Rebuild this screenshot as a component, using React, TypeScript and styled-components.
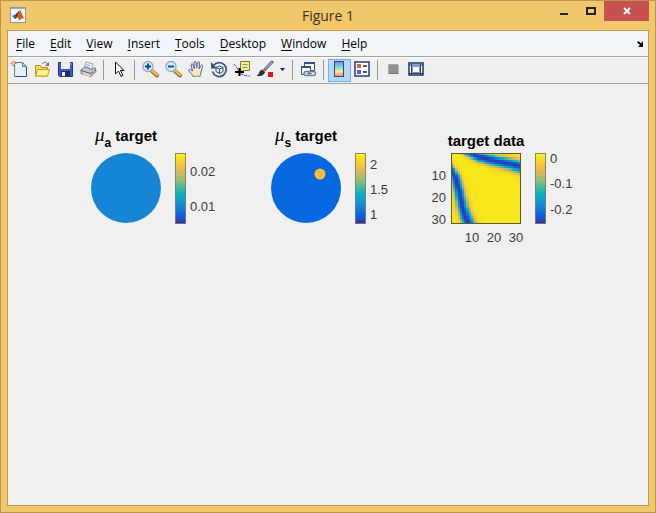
import React from "react";
import styled, { createGlobalStyle } from "styled-components";

const GlobalStyle = createGlobalStyle`
  *, *::before, *::after { box-sizing: border-box; }
  body { margin: 0; }
  button { font: inherit; color: inherit; border: 0; padding: 0; margin: 0; background: none; }
`;

const WindowFrame = styled.div`
  min-height: 100vh;
  display: flex;
  flex-direction: column;
  padding: 0 6px 6px;
  border: 1px solid #b8964c;
  background: #f0c76a;
  font-family: "Open Sans", "Noto Sans", sans-serif;
  color: #000;
`;

const TitleBar = styled.header`
  height: 29px;
  display: grid;
  grid-template-columns: 1fr auto 1fr;
  align-items: start;
`;

const AppIcon = styled.svg`
  margin: 6px 0 0 3px;
`;

const WindowTitle = styled.h1`
  margin: 0;
  font-size: 14px;
  font-weight: 400;
  line-height: 29px;
  color: #3d3322;
`;

const WindowButtons = styled.div`
  display: flex;
  justify-content: flex-end;
`;

const WindowButton = styled.button<{ $wide?: boolean; $danger?: boolean }>`
  width: ${(p) => (p.$wide ? 45 : 27)}px;
  height: 20px;
  display: grid;
  place-items: center;
  background: ${(p) => (p.$danger ? "#c75050" : "transparent")};
`;

const Client = styled.main`
  flex: 1;
  display: flex;
  flex-direction: column;
  border: 1px solid #bf9e52;
  background: #f0f0f0;
`;

const MenuBar = styled.nav`
  height: 25px;
  display: flex;
  align-items: center;
  gap: 15px;
  padding: 0 5px 0 8px;
  background: #f1f5f9;
  font-size: 12px;
  line-height: 24px;
`;

const MenuItem = styled.button`
  white-space: nowrap;
`;

const Mnemonic = styled.span`
  text-decoration: underline;
  text-underline-offset: 2px;
`;

const DockButton = styled.button`
  margin-left: auto;
  display: flex;
`;

const ToolBar = styled.div`
  height: 28px;
  display: flex;
  align-items: center;
  border-top: 1px solid #a2a2a4;
  border-bottom: 1px solid #a2a2a4;
  background: linear-gradient(#fdfdfd 0 1px, #f1f0f1 1px 4px, #efefef 4px);
`;

const ToolButton = styled.button<{ $active?: boolean; $narrow?: boolean }>`
  width: ${(p) => (p.$narrow ? 12 : 23)}px;
  height: 23px;
  padding: 0 1px 2px 0;
  display: grid;
  place-items: center;
  background: ${(p) => (p.$active ? "#b5d7f5" : "transparent")};
  outline: ${(p) => (p.$active ? "1px solid #6fb0e6" : "none")};
  outline-offset: -1px;
`;

const Separator = styled.span`
  width: 8px;
  height: 20px;
  display: flex;
  padding-left: 3px;
  &::before {
    content: "";
    width: 1px;
    background: #989898;
  }
`;

const Canvas = styled.section`
  flex: 1;
  display: flex;
  align-items: flex-start;
  padding: 41px 0 24px 63px;
  font-family: "Liberation Sans", Arial, sans-serif;
`;

const Subplot = styled.figure`
  width: 180px;
  margin: 0;
`;

const PlotTitle = styled.figcaption<{ $low?: boolean }>`
  width: 110px;
  height: 28px;
  padding-top: ${(p) => (p.$low ? 7 : 0)}px;
  font-size: 15px;
  font-weight: 700;
  line-height: 18px;
  text-align: center;
  white-space: nowrap;
`;

const Mu = styled.i`
  font-family: "Liberation Serif", "Times New Roman", serif;
  font-weight: 400;
  font-size: 19px;
  line-height: 1;
`;

const Sub = styled.sub`
  font-size: 12px;
  line-height: 1;
  vertical-align: -6px;
`;

const Axes = styled.svg`
  display: block;
  overflow: visible;
  text {
    font-size: 13px;
    fill: #3a3a3a;
  }
`;

/* ---------- colour map ---------- */

const PARULA: [number, number, number][] = [
  [53, 42, 135], [38, 74, 201], [3, 99, 225], [15, 119, 219], [20, 133, 212],
  [10, 154, 206], [6, 167, 198], [21, 177, 180], [56, 185, 158], [101, 190, 134],
  [146, 191, 115], [184, 189, 99], [217, 186, 86], [252, 190, 61], [252, 206, 46],
  [245, 227, 30], [249, 251, 14],
];

function parula(t: number): string {
  const p = Math.max(0, Math.min(1, t)) * (PARULA.length - 1);
  const i = Math.min(Math.floor(p), PARULA.length - 2);
  const f = p - i;
  const c = PARULA[i].map((v, k) => Math.round(v + (PARULA[i + 1][k] - v) * f));
  return `rgb(${c.join(",")})`;
}

/* ---------- heat map data: two curved valleys on a flat plateau ---------- */

type Pt = [number, number];
const N = 32;
const UPPER: Pt[] = [[6.5, -1], [9, 0.2], [13, 1.8], [20.7, 3.7], [28, 5.1], [33, 6.4]];
const LOWER: Pt[] = [[-1, 6], [0.6, 8.6], [1.9, 11], [3.7, 17.6], [5.2, 25], [6.4, 29], [8.3, 33]];

function valley(x: number, y: number, line: Pt[], inner: number): number {
  let best = Infinity;
  let side = 1;
  let along = 0;
  for (let i = 0; i < line.length - 1; i++) {
    const [ax, ay] = line[i];
    const dx = line[i + 1][0] - ax;
    const dy = line[i + 1][1] - ay;
    const u = Math.max(0, Math.min(1, ((x - ax) * dx + (y - ay) * dy) / (dx * dx + dy * dy)));
    const d = Math.hypot(x - ax - u * dx, y - ay - u * dy);
    if (d < best) {
      best = d;
      side = Math.sign(dx * (y - ay) - dy * (x - ax)) * inner;
      along = (i + u) / (line.length - 1);
    }
  }
  const s = side > 0 ? 1.25 + 0.95 * along : 1.25 + 0.6 * along;
  return Math.exp(-Math.pow(best / s, 2.2) / 2);
}

const CELLS = Array.from({ length: N * N }, (_, k) => {
  const col = k % N;
  const row = Math.floor(k / N);
  const g = Math.max(
    valley(col + 0.5, row + 0.5, UPPER, 1),
    valley(col + 0.5, row + 0.5, LOWER, -1)
  );
  return { col, row, fill: parula(0.95 - 0.92 * g) };
});

function HeatMap() {
  return (
    <g transform="translate(20 0)">
      <g transform="scale(2.1875)" shapeRendering="crispEdges">
        {CELLS.map((c) => (
          <rect key={`${c.col}-${c.row}`} x={c.col} y={c.row} width="1" height="1" fill={c.fill} />
        ))}
      </g>
      <rect x="0.5" y="0.5" width="69" height="70" fill="none" stroke="#5d5a2c" />
    </g>
  );
}

type Tick = { at: number; label: string };

function ColorBar({ id, ticks }: { id: string; ticks: Tick[] }) {
  return (
    <g>
      <defs>
        <linearGradient id={id} x1="0" y1="1" x2="0" y2="0">
          {PARULA.map((_, i) => (
            <stop key={i} offset={i / 16} stopColor={parula(i / 16)} />
          ))}
        </linearGradient>
      </defs>
      <rect x="104.5" y="0.5" width="10" height="70" fill={`url(#${id})`} stroke="#6b6b6b" strokeOpacity="0.8" />
      {ticks.map((t) => (
        <text key={t.label} x="119" y={t.at + 5}>{t.label}</text>
      ))}
    </g>
  );
}

/* ---------- toolbar drawings ---------- */

const Icon = ({ children }: { children: React.ReactNode }) => (
  <svg width="18" height="18" viewBox="0 0 18 18" fill="none" aria-hidden="true">{children}</svg>
);

const NewIcon = () => (
  <Icon>
    <path d="M4.500 2.500h8l4 4v10h-12z" fill="#e4effb" stroke="#5a7fae" />
    <path d="M16.500 7v9.500H5" stroke="#2f4f86" />
    <path d="M12.500 2.500v4h4z" fill="#b9d2ee" stroke="#5a7fae" />
    <path d="M3.500 0.500v6M0.500 3.500h6M1.500 1.500l4 4M5.500 1.500l-4 4" stroke="#e07a4a" />
    <circle cx="3.500" cy="3.500" r="1.200" fill="#ffd6a0" />
  </Icon>
);
const OpenIcon = () => (
  <Icon>
    <path d="M2.500 16v-10.500h5l1 2h6V16z" fill="#f7d968" stroke="#b8901e" />
    <path d="M2.500 16l2-6.500h12l-2 6.500z" fill="#fff08e" stroke="#c59a1a" />
    <path d="M9 4c2-2.500 4.500-2 5.500 0" stroke="#4f76a8" />
    <path d="M16 2v4h-4z" fill="#4f76a8" />
  </Icon>
);
const SaveIcon = () => (
  <Icon>
    <path d="M2.500 2.500h14v14h-13l-1-1z" fill="#3e58d0" stroke="#26358c" />
    <path d="M5 2h9v7H5z" fill="#e6f0fb" />
    <path d="M5 11h9v5H5z" fill="#222c62" />
    <path d="M6 12h3v4H6z" fill="#f1f4f8" />
    <path d="M15 3v2" stroke="#a9b8f2" />
  </Icon>
);
const PrintIcon = () => (
  <Icon>
    <path d="M5 9l2-7 7 2-2 7z" fill="#fbfcfe" stroke="#92a2b5" />
    <path d="M7.500 4.500l4 1M7 6.500l4 1" stroke="#85a7d4" />
    <path d="M2 10l4-3 7 2.500 3-2 1 4-5 5-10-3z" fill="#c6c8cc" stroke="#717680" />
    <path d="M2 10.500l10 3 5-4" stroke="#595e68" />
    <path d="M4 13.500l7 2.500" stroke="#f4f5f6" />
    <path d="M14 12h1" stroke="#d49c26" strokeWidth="2" />
  </Icon>
);
const PointerIcon = () => (
  <Icon>
    <path d="M5.500 2v12l3-3 2.500 5.500 2-1-2.500-5H14z" fill="#fff" stroke="#111" />
  </Icon>
);
const ZoomIcon = ({ plus }: { plus?: boolean }) => (
  <Icon>
    <path d="M11 11l5 4.500" stroke="#9a6725" strokeWidth="4" strokeLinecap="round" />
    <path d="M11 10.500l5 4.500" stroke="#f1b552" strokeWidth="2.400" strokeLinecap="round" />
    <circle cx="7" cy="6.500" r="5" fill="#d1edfa" stroke="#8fb0cf" strokeWidth="1.300" />
    <path d={plus ? "M4 6.500h6M7 3.500v6" : "M4 6.500h6"} stroke="#173c92" strokeWidth="1.800" />
  </Icon>
);
const HandIcon = () => (
  <Icon>
    <path
      d="M6 16.500c-1-2.500-3-4-4.500-6 0-1.500 1.500-1.500 2.500-.5l1.500 1L4 5c0-1.500 1.500-1.700 2-.3l1.300 4L7 2.500c.2-1.500 1.800-1.500 2 0l.6 5.500 1-5.500c.5-1.300 2-1 2 .4L12 9l1.800-3.500c.7-1.200 2.200-.6 1.900.8L14 12c-.2 2-.8 3-1 4.500z"
      fill="#fbe3c4" stroke="#4a64a4"
    />
    <path d="M7 16h5.500" stroke="#e8b989" strokeWidth="1.500" />
  </Icon>
);
const RotateIcon = () => (
  <Icon>
    <path d="M3.500 5.500a7 7 0 1 1-1 6" stroke="#405985" strokeWidth="1.800" />
    <path d="M1 2v6.500h6z" fill="#354e7c" />
    <path d="M6 7.500L9.500 6l3.500 1.500v4L9.500 13.500 6 11.500zM6 7.500L9.500 9 13 7.500M9.500 9v4.500" fill="#e9f2fb" stroke="#344c79" />
  </Icon>
);
const CursorIcon = () => (
  <Icon>
    <path d="M1 4c2 2 3 5 5 8 3 3 6 4 11 4" stroke="#4450d4" strokeDasharray="3 1" />
    <path d="M7.500 1.500h9v9h-6l-2 3v-3h-1z" fill="#f3ec96" stroke="#817a31" />
    <path d="M9.500 4.500h5M9.500 7.500h5" stroke="#9a9348" />
    <path d="M2 12h9M6.500 8v8" stroke="#000" strokeWidth="2" />
  </Icon>
);
const BrushIcon = () => (
  <Icon>
    <path d="M9 9.500L16 2" stroke="#5d6b96" strokeWidth="3" strokeLinecap="round" />
    <path d="M9.500 9L16 2" stroke="#c3cbe8" />
    <path d="M1.500 15.500c2.500-.5 1.500-4 4-5.500l3 2c-.5 3-4 4-7 3.500z" fill="#343434" stroke="#222" />
    <path d="M6 10l3 2 1.500-2-2-1.800z" fill="#a97642" />
    <path d="M12 12h5v5h-5z" fill="#f20d0d" />
  </Icon>
);
const LinkIcon = () => (
  <Icon>
    <path d="M5.500 2.500h10v8h-10z" fill="#f8fafd" stroke="#35517f" />
    <path d="M5 3h11" stroke="#35517f" strokeWidth="2" />
    <path d="M11.500 11V6.500h-9v8h4" fill="#f8fafd" stroke="#35517f" />
    <path d="M2 7h10" stroke="#35517f" strokeWidth="2" />
    <rect x="5" y="11.500" width="6.500" height="4" rx="2" fill="#e8edf4" stroke="#6a7e9e" strokeWidth="1.400" />
    <rect x="10" y="11.500" width="6.500" height="4" rx="2" fill="#e8edf4" stroke="#6a7e9e" strokeWidth="1.400" />
    <path d="M8 13.500h5" stroke="#6a7e9e" />
  </Icon>
);
const ColorbarIcon = () => (
  <Icon>
    <defs>
      <linearGradient id="cbi" x1="0" y1="0" x2="0" y2="1">
        <stop offset="0" stopColor="#7d86d8" />
        <stop offset="0.350" stopColor="#79d5df" />
        <stop offset="0.650" stopColor="#f8ec98" />
        <stop offset="1" stopColor="#f08a75" />
      </linearGradient>
    </defs>
    <rect x="4.500" y="1.500" width="9" height="15" fill="url(#cbi)" stroke="#33466f" />
  </Icon>
);
const LegendIcon = () => (
  <Icon>
    <rect x="2" y="2" width="14" height="14" fill="#fff" stroke="#293d73" strokeWidth="1.500" />
    <path d="M4 4h4v4H4z" fill="#e45a5a" />
    <path d="M4 10h4v4H4z" fill="#5361d8" />
    <path d="M10 6h4M10 12h4" stroke="#1c1c28" strokeWidth="1.500" />
  </Icon>
);
const HideToolsIcon = () => (
  <Icon>
    <rect x="4.500" y="4.500" width="9" height="9" fill="#8f8f8f" stroke="#aaa" />
    <path d="M5 13.500h9V5" stroke="#777" />
  </Icon>
);
const ShowToolsIcon = () => (
  <Icon>
    <rect x="2" y="3" width="14" height="12" fill="#f7fafc" stroke="#293f70" strokeWidth="1.600" />
    <path d="M2 5h14M2 13.500h14M4.500 4v11M13.500 4v11" stroke="#293f70" />
    <path d="M5.500 6.500h7v6h-7z" fill="#fff" stroke="#8494b4" />
  </Icon>
);

const MENUS = ["File", "Edit", "View", "Insert", "Tools", "Desktop", "Window", "Help"];

export default function App() {
  return (
    <>
      <GlobalStyle />
      <WindowFrame>
        <TitleBar>
          <AppIcon width="16" height="16" viewBox="0 0 16 16" aria-hidden="true">
            <rect x="0.500" y="0.500" width="15" height="15" fill="#f3f6f9" stroke="#8d98a2" />
            <path d="M1 1.500h14" stroke="#8fb0d5" />
            <path d="M2 9l4-2 2 1.500L5 12z" fill="#3873a6" />
            <path d="M6 7l4-4-2.500 7L5 12z" fill="#65312b" />
            <path d="M10 3c1.500 1.500 2.500 6 4.500 9-2-1-3-.5-5 1.500L7.500 10z" fill="#d85a22" />
          </AppIcon>
          <WindowTitle>Figure 1</WindowTitle>
          <WindowButtons>
            <WindowButton aria-label="Minimize">
              <svg width="10" height="10"><path d="M1 7h8v2H1z" fill="#24221e" /></svg>
            </WindowButton>
            <WindowButton aria-label="Maximize">
              <svg width="10" height="8"><path d="M1 1h8v6H1z" fill="none" stroke="#24221e" strokeWidth="2" /></svg>
            </WindowButton>
            <WindowButton $wide $danger aria-label="Close">
              <svg width="8" height="8"><path d="M1 1l6 6M7 1L1 7" stroke="#fff" strokeWidth="1.800" /></svg>
            </WindowButton>
          </WindowButtons>
        </TitleBar>
        <Client>
          <MenuBar>
            {MENUS.map((m) => (
              <MenuItem key={m}><Mnemonic>{m[0]}</Mnemonic>{m.slice(1)}</MenuItem>
            ))}
            <DockButton aria-label="Dock figure">
              <svg width="7" height="7"><path d="M7 1v6H2l2-2-3-2.500L2.500 1 5 3.500z" fill="#000" /></svg>
            </DockButton>
          </MenuBar>
          <ToolBar role="toolbar">
            <ToolButton aria-label="New Figure"><NewIcon /></ToolButton>
            <ToolButton aria-label="Open File"><OpenIcon /></ToolButton>
            <ToolButton aria-label="Save Figure"><SaveIcon /></ToolButton>
            <ToolButton aria-label="Print Figure"><PrintIcon /></ToolButton>
            <Separator />
            <ToolButton aria-label="Edit Plot"><PointerIcon /></ToolButton>
            <Separator />
            <ToolButton aria-label="Zoom In"><ZoomIcon plus /></ToolButton>
            <ToolButton aria-label="Zoom Out"><ZoomIcon /></ToolButton>
            <ToolButton aria-label="Pan"><HandIcon /></ToolButton>
            <ToolButton aria-label="Rotate 3D"><RotateIcon /></ToolButton>
            <ToolButton aria-label="Data Cursor"><CursorIcon /></ToolButton>
            <ToolButton aria-label="Brush Data"><BrushIcon /></ToolButton>
            <ToolButton $narrow aria-label="Brush colours">
              <svg width="5" height="3"><path d="M0 0h5L2.500 3z" fill="#222" /></svg>
            </ToolButton>
            <Separator />
            <ToolButton aria-label="Link Plot"><LinkIcon /></ToolButton>
            <Separator />
            <ToolButton $active aria-pressed="true" aria-label="Insert Colorbar"><ColorbarIcon /></ToolButton>
            <ToolButton aria-label="Insert Legend"><LegendIcon /></ToolButton>
            <Separator />
            <ToolButton aria-label="Hide Plot Tools"><HideToolsIcon /></ToolButton>
            <ToolButton aria-label="Show Plot Tools"><ShowToolsIcon /></ToolButton>
          </ToolBar>
          <Canvas>
            <Subplot>
              <PlotTitle><Mu>μ</Mu><Sub>a</Sub> target</PlotTitle>
              <Axes width="160" height="92">
                <circle cx="55" cy="35" r="35" fill="#1685d4" />
                <ColorBar id="bar-a" ticks={[{ at: 18, label: "0.02" }, { at: 53, label: "0.01" }]} />
              </Axes>
            </Subplot>
            <Subplot>
              <PlotTitle><Mu>μ</Mu><Sub>s</Sub> target</PlotTitle>
              <Axes width="160" height="92">
                <circle cx="55" cy="35" r="35" fill="#0568e1" />
                <circle cx="69" cy="21" r="5.500" fill="#fdbd3d" />
                <ColorBar id="bar-s" ticks={[{ at: 11, label: "2" }, { at: 36, label: "1.5" }, { at: 61, label: "1" }]} />
              </Axes>
            </Subplot>
            <Subplot>
              <PlotTitle $low>target data</PlotTitle>
              <Axes width="160" height="92">
                <HeatMap />
                <g textAnchor="end">
                  <text x="15" y="27">10</text>
                  <text x="15" y="49">20</text>
                  <text x="15" y="71">30</text>
                </g>
                <g textAnchor="middle">
                  <text x="41" y="89">10</text>
                  <text x="63" y="89">20</text>
                  <text x="85" y="89">30</text>
                </g>
                <ColorBar id="bar-d" ticks={[{ at: 5, label: "0" }, { at: 30, label: "-0.1" }, { at: 56, label: "-0.2" }]} />
              </Axes>
            </Subplot>
          </Canvas>
        </Client>
      </WindowFrame>
    </>
  );
}
